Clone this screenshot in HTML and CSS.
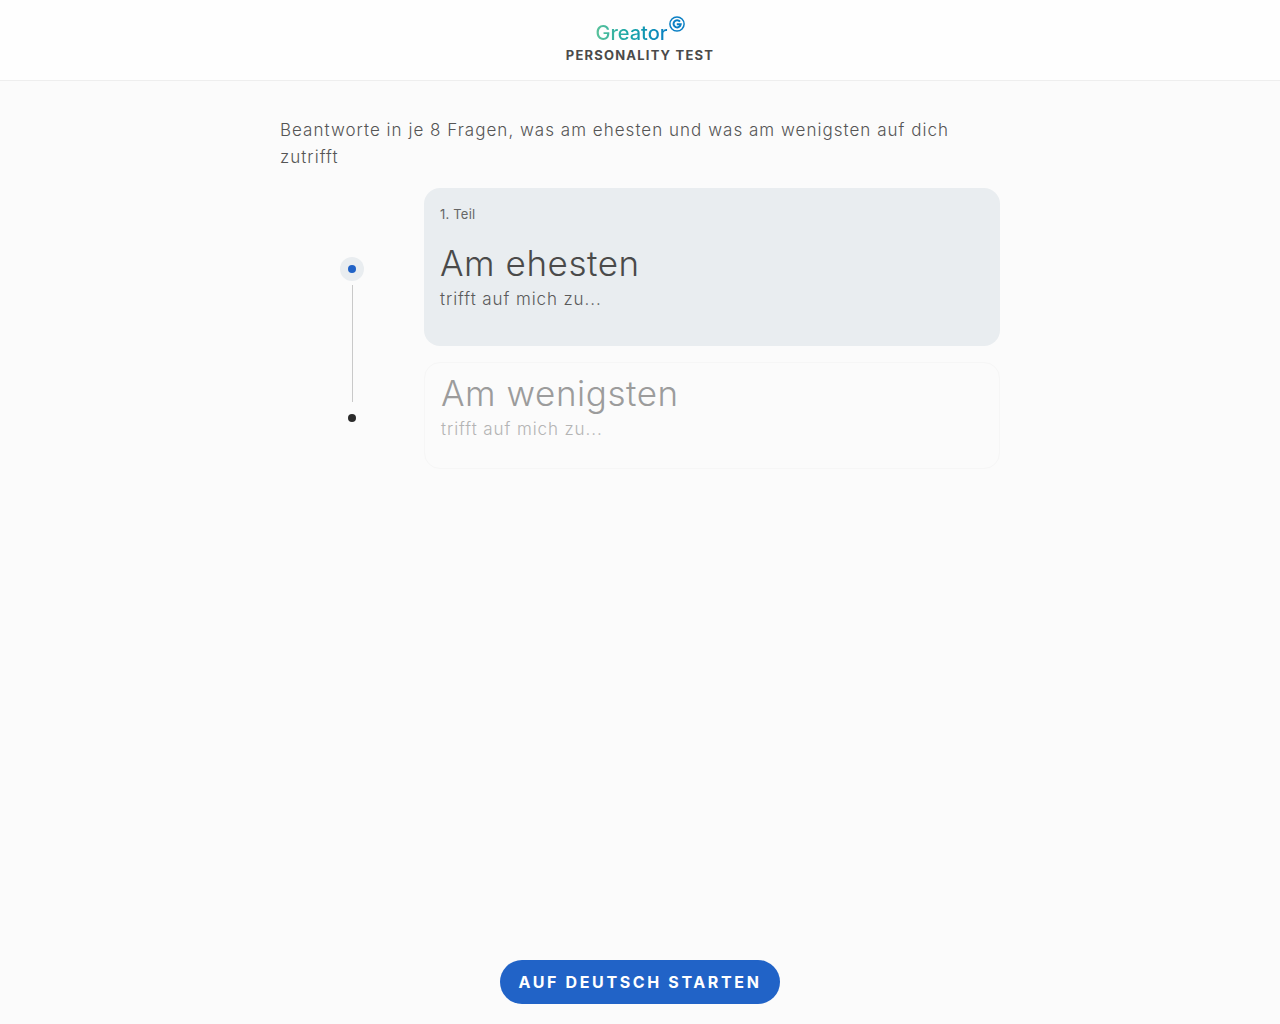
FILE: index.html
```html
<!DOCTYPE html>
<html lang="de">
<head>
<meta charset="utf-8">
<title>Greator Personality Test</title>
<link rel="stylesheet" href="styles.css">
</head>
<body>
<div class="page">
  <header class="header">
    <div class="logo">
      <span class="logo-word">Greator</span>
      <svg class="logo-mark" width="16" height="16" viewBox="0 0 16 16" aria-hidden="true">
        <circle cx="8" cy="8" r="7.1" fill="none" stroke="#0a7fc4" stroke-width="1.5"/>
        <path d="M11 5.6A3.6 3.6 0 1 0 11.7 8.3H7.8" fill="none" stroke="#0a7fc4" stroke-width="2"/>
      </svg>
    </div>
    <div class="subtitle">PERSONALITY TEST</div>
  </header>
  <main class="main">
    <p class="intro">Beantworte in je 8 Fragen, was am ehesten und was am wenigsten auf dich zutrifft</p>
    <div class="steps">
      <div class="timeline">
        <span class="dot-active"><span class="dot-blue"></span></span>
        <span class="line"></span>
        <span class="dot-dark"></span>
      </div>
      <div class="cards">
        <section class="card card-active">
          <div class="part">1. Teil</div>
          <h2 class="card-title">Am ehesten</h2>
          <div class="card-sub">trifft auf mich zu...</div>
        </section>
        <section class="card card-next">
          <h2 class="card-title">Am wenigsten</h2>
          <div class="card-sub">trifft auf mich zu...</div>
        </section>
      </div>
    </div>
  </main>
  <footer class="footer">
    <button class="start" type="button">AUF DEUTSCH STARTEN</button>
  </footer>
</div>
</body>
</html>
```
FILE: styles.css
```css
* { box-sizing: border-box; }
html, body { margin: 0; height: 100%; }
body {
  background: #fbfbfb;
  color: #4a4a4a;
  font-family: "Inter", "Liberation Sans", sans-serif;
}
.page { height: 1024px; display: flex; flex-direction: column; overflow: hidden; }
.header {
  height: 81px;
  background: #fefefe;
  border-bottom: 1px solid #eeeeee;
  display: flex;
  flex-direction: column;
  align-items: center;
  padding-top: 15px;
}
.logo { display: flex; align-items: flex-start; height: 32px; }
.logo-word {
  font-size: 20px;
  line-height: 24px;
  margin-top: 6px;
  font-weight: 500;
  letter-spacing: 0;
  background: linear-gradient(90deg, #5cc39a, #14a3a8 50%, #0a7fc4);
  -webkit-background-clip: text;
  background-clip: text;
  color: transparent;
}
.logo-mark { margin-top: 1px; margin-left: 1px; }
.subtitle {
  font-size: 13px;
  line-height: 16px;
  font-weight: 700;
  letter-spacing: 1.2px;
  color: #4a4a4a;
}
.main { width: 720px; margin: 0 auto; flex: 1; }
.intro {
  margin: 36px 0 17px;
  font-size: 17px;
  line-height: 27px;
  font-weight: 300;
  letter-spacing: 1.02px;
  color: #555;
}
.steps { display: flex; }
.timeline {
  width: 144px;
  padding: 69px 0 0 60px;
  display: flex;
  flex-direction: column;
  align-items: flex-start;
}
.dot-active {
  width: 24px; height: 24px; border-radius: 50%;
  background: #e9edf0;
  display: flex; align-items: center; justify-content: center;
}
.dot-blue { width: 8px; height: 8px; border-radius: 50%; background: #2163c7; }
.line { width: 1px; height: 117px; margin: 4px 0 12px 12px; background: #c9c9c9; }
.dot-dark { width: 8px; height: 8px; margin-left: 8px; border-radius: 50%; background: #2b2b2b; }
.cards { width: 576px; display: flex; flex-direction: column; gap: 16px; }
.card { border-radius: 16px; padding: 0 16px; }
.card-active { height: 158px; background: #e9edf0; padding-top: 18px; }
.card-next { height: 107px; border: 1px solid #f6f6f6; padding-top: 8px; }
.part { font-size: 13px; line-height: 16px; font-weight: 400; letter-spacing: 0.2px; color: #666; }
.card-title {
  margin: 0 0 1px;
  font-size: 35px;
  line-height: 44px;
  font-weight: 300;
  letter-spacing: 0.55px;
  color: #4a4a4a;
}
.card-active .card-title { margin-top: 19px; }
.card-sub { font-size: 17px; line-height: 26px; font-weight: 300; letter-spacing: 0.9px; color: #5a5a5a; }
.card-next .card-title { color: #9c9c9c; }
.card-next .card-sub { color: #b4b4b4; }
.footer { display: flex; justify-content: center; padding-bottom: 20px; }
.start {
  width: 280px; height: 44px;
  border: 0; border-radius: 22px;
  background: #2163c7;
  color: #fff;
  font-family: inherit;
  font-size: 16px;
  font-weight: 700;
  letter-spacing: 2.63px;
}
```
